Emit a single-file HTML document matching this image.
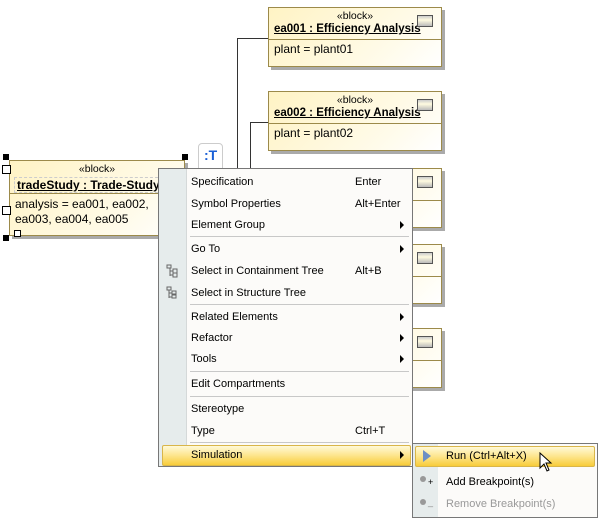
<!DOCTYPE html>
<html><head><style>
body{margin:0;width:600px;height:519px;background:#fff;position:relative;overflow:hidden;font-family:"Liberation Sans",Tahoma,sans-serif;font-size:11px;color:#000}
.a{position:absolute}
.blk{position:absolute;border:1px solid #9c8a4a;background:linear-gradient(135deg,#fff3c4,#fffbea 70%,#fff);box-shadow:3px 3px 0 #aaa;width:172px;height:58px}
.blk .st{position:absolute;left:0;right:0;top:2px;text-align:center;font-size:10.5px}
.blk .nm{position:absolute;left:5px;top:15px;font-weight:bold;text-decoration:underline;font-size:11.5px}
.blk .hr{position:absolute;left:0;right:0;top:31px;border-top:1px solid #9c8a4a}
.blk .at{position:absolute;left:5px;top:34px;font-size:12px}
.ic{position:absolute;right:8px;top:7px;width:14px;height:10px;border:1px solid #555;background:linear-gradient(#ccc,#fffbe0 40%,#bbb)}
.line{position:absolute;background:#333}
.menu{position:absolute;left:158px;top:168px;width:253px;height:297px;background:#fcfbf9;border:1px solid #777;}
.gut{position:absolute;left:0;top:0;bottom:0;width:27px;background:#e6ecec;border-right:1px solid #d5d9d9}
.it{position:absolute;left:32px;font-size:11px}
.sc{position:absolute;left:196px;font-size:11px}
.ar{position:absolute;left:241px;width:0;height:0;border-left:4px solid #000;border-top:4px solid transparent;border-bottom:4px solid transparent}
.sep{position:absolute;left:31px;right:3px;border-top:1px solid #c8c8c8}
.hl{background:linear-gradient(#fff9d8,#fde58c 50%,#f8cc3a);border:1px solid #d9b64a;border-radius:2px}
.h{position:absolute;width:6px;height:6px;background:#000}
</style></head><body>
<div class="line" style="left:237px;top:38px;width:31px;height:1px"></div>
<div class="line" style="left:237px;top:38px;width:1px;height:130px"></div>
<div class="line" style="left:250px;top:122px;width:18px;height:1px"></div>
<div class="line" style="left:250px;top:122px;width:1px;height:46px"></div>

<div class="blk" style="left:268px;top:7px"><div class="st">«block»</div><div class="nm">ea001 : Efficiency Analysis</div><div class="ic"></div><div class="hr"></div><div class="at">plant = plant01</div></div>
<div class="blk" style="left:268px;top:91px"><div class="st">«block»</div><div class="nm">ea002 : Efficiency Analysis</div><div class="ic"></div><div class="hr"></div><div class="at">plant = plant02</div></div>
<div class="blk" style="left:268px;top:168px"><div class="ic"></div><div class="hr"></div></div>
<div class="blk" style="left:268px;top:244px"><div class="ic"></div><div class="hr"></div></div>
<div class="blk" style="left:268px;top:328px"><div class="ic"></div><div class="hr"></div></div>

<div class="a" style="left:198px;top:143px;width:23px;height:30px;border:1px solid #ccc;border-radius:4px;background:#fff"></div>
<div class="a" style="left:204px;top:147px;color:#1a5fd6;font-weight:bold;font-size:14px">:T</div>

<div class="blk" style="left:9px;top:160px;width:174px;height:74px">
<div class="st">«block»</div>
<div class="nm" style="top:16px;border:1px dashed #ccc;padding:0 2px;left:4px;font-size:12px">tradeStudy : Trade-Study</div>
<div class="hr" style="top:32px"></div>
<div class="at" style="top:36px;font-size:12px;line-height:15px">analysis = ea001, ea002,<br>ea003, ea004, ea005</div>
</div>
<div class="h" style="left:3px;top:154px"></div><div class="h" style="left:182px;top:154px"></div>
<div class="h" style="left:3px;top:235px"></div>
<div class="a" style="left:2px;top:165px;width:7px;height:7px;border:1px solid #000;background:#fff"></div>
<div class="a" style="left:2px;top:206px;width:7px;height:7px;border:1px solid #000;background:#fff"></div>
<div class="a" style="left:14px;top:230px;width:5px;height:5px;border:1px solid #000;background:#fff"></div>

<div class="menu"><div class="gut"></div>
<div class="it" style="top:7px">Specification</div><div class="sc" style="top:7px">Enter</div>
<div class="it" style="top:29px">Symbol Properties</div><div class="sc" style="top:29px">Alt+Enter</div>
<div class="it" style="top:50px">Element Group</div><div class="ar" style="top:52px"></div>
<div class="sep" style="top:67px"></div>
<div class="it" style="top:74px">Go To</div><div class="ar" style="top:76px"></div>
<svg class="a" style="left:7px;top:95px" width="12" height="14"><path d="M1 1h4v3H1zM4 4v8M4 7h3M4 11h3M7 5h4v4H7zM7 9h4v4H7z" fill="none" stroke="#666"/></svg>
<div class="it" style="top:96px">Select in Containment Tree</div><div class="sc" style="top:96px">Alt+B</div>
<svg class="a" style="left:7px;top:117px" width="12" height="14"><path d="M1 1h4v3H1zM3 4v8M3 7h3M3 11h3M6 5h4v3H6zM6 9h4v3H6z" fill="none" stroke="#666"/></svg>
<div class="it" style="top:118px">Select in Structure Tree</div>
<div class="sep" style="top:135px"></div>
<div class="it" style="top:142px">Related Elements</div><div class="ar" style="top:144px"></div>
<div class="it" style="top:163px">Refactor</div><div class="ar" style="top:165px"></div>
<div class="it" style="top:184px">Tools</div><div class="ar" style="top:186px"></div>
<div class="sep" style="top:202px"></div>
<div class="it" style="top:209px">Edit Compartments</div>
<div class="sep" style="top:227px"></div>
<div class="it" style="top:234px">Stereotype</div>
<div class="it" style="top:256px">Type</div><div class="sc" style="top:256px">Ctrl+T</div>
<div class="sep" style="top:273px"></div>
<div class="a hl" style="left:3px;top:276px;width:247px;height:19px"></div>
<div class="it" style="top:280px">Simulation</div><div class="ar" style="top:282px"></div>
</div>

<div class="a" style="left:412px;top:443px;width:184px;height:73px;background:#fcfbf9;border:1px solid #777">
<div class="a" style="left:0;top:0;bottom:0;width:25px;background:#e6ecec"></div>
<div class="a hl" style="left:2px;top:2px;width:178px;height:19px"></div>
<div class="a" style="left:10px;top:6px;width:0;height:0;border-left:8px solid #6d8fc4;border-top:6px solid transparent;border-bottom:6px solid transparent"></div>
<div class="a" style="left:33px;top:6px">Run (Ctrl+Alt+X)</div>
<div class="a" style="left:7px;top:32px;width:6px;height:6px;border-radius:50%;background:#999"></div><div class="a" style="left:15px;top:33px;font-size:9px">+</div>
<div class="a" style="left:33px;top:32px">Add Breakpoint(s)</div>
<div class="a" style="left:7px;top:55px;width:6px;height:6px;border-radius:50%;background:#999"></div><div class="a" style="left:15px;top:53px;font-size:9px;color:#888">_</div>
<div class="a" style="left:33px;top:54px;color:#999">Remove Breakpoint(s)</div>
</div>
<svg class="a" style="left:539px;top:452px" width="14" height="22"><path d="M1 1 L1 16 L5 12 L8 19 L10 18 L7 11 L12 11 Z" fill="#fff" stroke="#000"/></svg>
</body></html>
